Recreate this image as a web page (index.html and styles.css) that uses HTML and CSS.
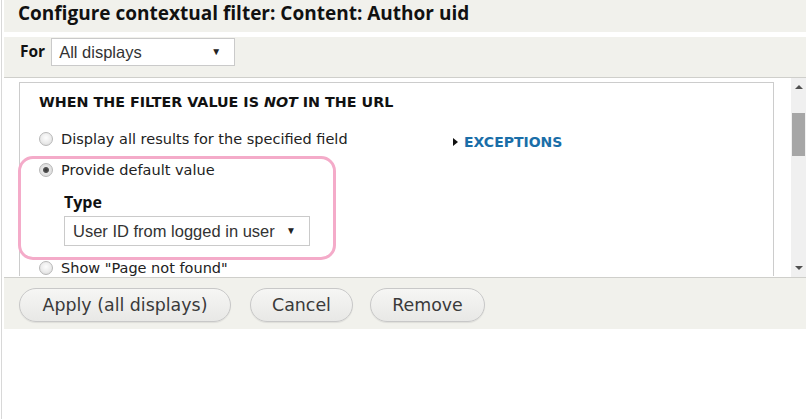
FILE: index.html
```html
<!DOCTYPE html>
<html lang="en">
<head>
    <meta charset="UTF-8">
    <title>Configure contextual filter</title>
    <link rel="stylesheet" href="styles.css">
</head>
<body>
    <div class="page">
        <div class="dialog">
            <h1 class="dialog-title">Configure contextual filter: Content: Author uid</h1>

            <div class="display-bar">
                <span class="for-label">For</span>
                <div class="select select-displays">All displays<span class="caret">&#9660;</span></div>
            </div>

            <div class="scroll-area">
                <div class="scroll-content">
                    <div class="filter-box">
                        <h2 class="box-title">WHEN THE FILTER VALUE IS <em>NOT</em> IN THE URL</h2>

                        <div class="box-row">
                            <div class="options">
                                <label class="option option-first"><span class="radio"></span>Display all results for the specified field</label>

                                <!-- highlighted part -->
                                <div class="highlight">
                                    <label class="option option-default"><span class="radio checked"></span>Provide default value</label>
                                    <div class="type-field">
                                        <div class="type-label">Type</div>
                                        <div class="select select-type">User ID from logged in user<span class="caret">&#9660;</span></div>
                                    </div>
                                </div>

                                <label class="option option-after"><span class="radio"></span>Show "Page not found"</label>
                            </div>

                            <div class="exceptions"><span class="arrow"></span>EXCEPTIONS</div>
                        </div>
                    </div>
                </div>

                <div class="scrollbar">
                    <span class="sb-up"></span>
                    <span class="sb-thumb"></span>
                    <span class="sb-down"></span>
                </div>
            </div>

            <div class="actions">
                <button class="btn btn-apply">Apply (all displays)</button>
                <button class="btn btn-cancel">Cancel</button>
                <button class="btn btn-remove">Remove</button>
            </div>
        </div>
    </div>
</body>
</html>
```

FILE: styles.css
```css
html, body {
    margin: 0;
    padding: 0;
    background: #fff;
}

body {
    font-family: 'DejaVu Sans', sans-serif;
    color: #222;
}

.page {
    height: 419px;
    margin-left: 1px;
    border-left: 1px solid #d8d8d8;
}

.dialog {
    margin-left: 2px;
    width: 802px;
}

.dialog-title {
    margin: 0;
    height: 32px;
    padding: 0 0 0 14px;
    background: #f1f1ec;
    font-family: 'Open Sans', 'DejaVu Sans', sans-serif;
    font-size: 19px;
    font-weight: bold;
    line-height: 26px;
    color: #111;
}

.display-bar {
    margin-top: 5px;
    height: 41px;
    background: #f1f1ec;
    border-bottom: 1px solid #cfcfcb;
    display: flex;
    align-items: flex-start;
    padding: 1px 0 0 16px;
    box-sizing: border-box;
    gap: 6px;
}

.for-label {
    font-family: 'Open Sans', 'DejaVu Sans', sans-serif;
    font-size: 15.5px;
    font-weight: bold;
    color: #111;
    line-height: 26px;
}

.select {
    position: relative;
    background: #fff;
    border: 1px solid #cacaca;
    font-family: 'Liberation Sans', Arial, sans-serif;
    font-size: 16.5px;
    color: #333;
    box-sizing: border-box;
}

.select-displays {
    width: 184px;
    height: 28px;
    line-height: 26px;
    padding-left: 7px;
}

.caret {
    position: absolute;
    right: 13px;
    top: 0;
    font-size: 10px;
    color: #222;
}

.scroll-area {
    height: 199px;
    display: flex;
    border-bottom: 1px solid #cfcfcb;
    background: #fff;
}

.scroll-content {
    flex: 1;
    overflow: hidden;
}

.scrollbar {
    width: 15px;
    flex: none;
    background: #f0f0f0;
    display: flex;
    flex-direction: column;
    align-items: center;
}

.sb-up,
.sb-down {
    width: 0;
    height: 0;
    border-left: 4px solid transparent;
    border-right: 4px solid transparent;
}

.sb-up {
    margin-top: 7px;
    border-bottom: 4px solid #505050;
}

.sb-thumb {
    margin-top: 24px;
    width: 13px;
    height: 43px;
    background: #a6a6a6;
}

.sb-down {
    margin-top: auto;
    margin-bottom: 7px;
    border-top: 4px solid #505050;
}

.filter-box {
    margin: 4px 17px 0 15px;
    border: 1px solid #cccccc;
    border-bottom: none;
    padding: 9px 19px 0 19px;
}

.box-title {
    margin: 0 0 12px 0;
    font-size: 14.3px;
    font-weight: bold;
    color: #111;
    line-height: 20px;
}

.box-title em {
    font-style: italic;
}

.box-row {
    display: flex;
}

.options {
    width: 414px;
    display: flex;
    flex-direction: column;
}

.option {
    display: flex;
    align-items: center;
    gap: 8px;
    height: 30px;
    font-size: 14.5px;
    color: #222;
    white-space: nowrap;
}

.option-default {
    height: 21px;
}

.option-after {
    height: 16px;
}

.radio {
    width: 14px;
    height: 14px;
    border-radius: 50%;
    box-sizing: border-box;
    border: 1px solid #b8b8b8;
    background: radial-gradient(circle at 50% 40%, #fdfdfd 0%, #ebebeb 55%, #d4d4d4 100%);
    flex: none;
}

.radio.checked {
    background: radial-gradient(circle, #333 0, #555 2.5px, #e6e6e6 3.5px, #d6d6d6 100%);
}

.highlight {
    margin: 2px 0 0 -21px;
    padding: 0 0 11px 18px;
    width: 318px;
    box-sizing: border-box;
    border: 3px solid #f4abc9;
    border-radius: 15px;
}

.type-field {
    padding-left: 25px;
}

.type-label {
    font-family: 'Open Sans', 'DejaVu Sans', sans-serif;
    font-size: 16px;
    font-weight: bold;
    color: #111;
    line-height: 20px;
    margin: 12px 0 4px 0;
}

.select-type {
    width: 246px;
    height: 30px;
    line-height: 28px;
    padding-left: 8px;
}

.exceptions {
    display: flex;
    align-items: center;
    gap: 6px;
    margin-top: 11px;
    height: 14px;
    font-size: 14px;
    font-weight: bold;
    color: #1a6ea8;
    white-space: nowrap;
}

.arrow {
    width: 0;
    height: 0;
    border-top: 4px solid transparent;
    border-bottom: 4px solid transparent;
    border-left: 5px solid #111;
}

.actions {
    background: #f1f1ec;
    height: 51px;
    padding: 10px 0 0 15px;
    box-sizing: border-box;
    display: flex;
    gap: 17px;
}

.btn {
    height: 34px;
    border: 1px solid #c8c8c8;
    border-radius: 17px;
    background: linear-gradient(#f6f6f4, #e8e8e6);
    font-family: 'DejaVu Sans', sans-serif;
    font-size: 17.4px;
    color: #3a3a3a;
    padding: 0;
    box-shadow: 0 1px 1px rgba(0, 0, 0, 0.08);
}

.btn-apply {
    width: 212px;
    margin-right: 2px;
}

.btn-cancel {
    width: 103px;
}

.btn-remove {
    width: 115px;
}
```
